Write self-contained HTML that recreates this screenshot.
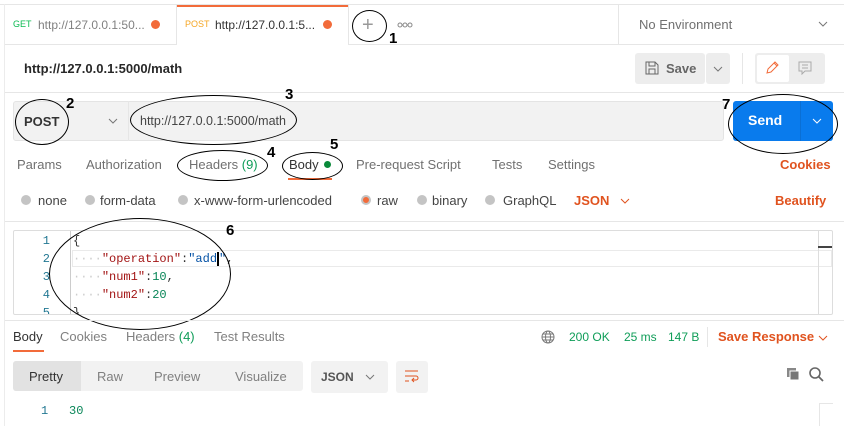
<!DOCTYPE html>
<html><head><meta charset="utf-8"><style>
*{margin:0;padding:0;box-sizing:border-box}
body{width:844px;height:426px;background:#fff;position:relative;overflow:hidden;font-family:"Liberation Sans",sans-serif;font-size:12px;color:#505050}
.a{position:absolute;white-space:nowrap}
.ln{position:absolute;background:#e6e6e6}
.mono{font-family:"Liberation Mono",monospace;font-size:12px}
.ell{position:absolute;border:1px solid #000;border-radius:50%}
.num{position:absolute;font-weight:bold;font-size:15px;color:#000}
.dot{position:absolute;width:10px;height:10px;border-radius:50%;background:#c4c4c4}
.or{color:#e0531f}
.t13{font-size:13px}
</style></head><body>
<div class="ln" style="left:0;top:4px;width:844px;height:1px"></div>
<div class="ln" style="left:4px;top:4px;width:1px;height:422px;background:#ececec"></div>
<div class="ln" style="left:5px;top:44px;width:172px;height:1px"></div>
<div class="ln" style="left:349px;top:44px;width:495px;height:1px"></div>
<div class="ln" style="left:176px;top:5px;width:1px;height:40px"></div>
<div class="ln" style="left:348px;top:5px;width:1px;height:40px"></div>
<div class="ln" style="left:618px;top:5px;width:1px;height:40px"></div>
<div class="a" style="left:177px;top:5px;width:171px;height:2px;background:#f26b3a"></div>
<div class="a" style="left:13px;top:19px;font-size:9px;color:#0cbb52">GET</div>
<div class="a" style="left:38px;top:18px;color:#808080">http://127.0.0.1:50...</div>
<div class="a" style="left:151px;top:20px;width:9px;height:9px;border-radius:50%;background:#f26b3a"></div>
<div class="a" style="left:185px;top:19px;font-size:9px;color:#f5a623">POST</div>
<div class="a" style="left:215px;top:18px;color:#333">http://127.0.0.1:5...</div>
<div class="a" style="left:323px;top:20px;width:9px;height:9px;border-radius:50%;background:#f26b3a"></div>
<div class="a" style="left:362px;top:17px;font-size:20px;color:#999;line-height:16px">+</div>
<div class="ell" style="left:352px;top:10px;width:35px;height:32px"></div>
<div class="num" style="left:389px;top:30px">1</div>
<svg class="a" style="left:397px;top:22px" width="16" height="6"><circle cx="3" cy="3" r="2" stroke="#888" fill="none"/><circle cx="8" cy="3" r="2" stroke="#888" fill="none"/><circle cx="13" cy="3" r="2" stroke="#888" fill="none"/></svg>
<div class="a t13" style="left:639px;top:17px;color:#707070">No Environment</div>
<svg class="a" style="left:818px;top:21px" width="10" height="6"><path d="M1 1l4 4 4-4" stroke="#777" fill="none"/></svg>
<div class="a" style="left:24px;top:61px;font-weight:bold;font-size:13px;color:#282828">http://127.0.0.1:5000/math</div>
<div class="a" style="left:635px;top:53px;width:70px;height:31px;background:#ededed;border-radius:3px"></div>
<svg class="a" style="left:645px;top:61px" width="14" height="14"><path d="M1 1h9l3 3v9H1z M4 1v4h6V1 M4 13V8h6v5" stroke="#666" fill="none"/></svg>
<div class="a t13" style="left:666px;top:61px;font-weight:bold;color:#666">Save</div>
<div class="a" style="left:706px;top:53px;width:24px;height:31px;background:#ededed;border-radius:3px"></div>
<svg class="a" style="left:713px;top:66px" width="10" height="6"><path d="M1 1l4 4 4-4" stroke="#777" fill="none"/></svg>
<div class="ln" style="left:742px;top:53px;width:1px;height:31px"></div>
<div class="a" style="left:755px;top:53px;width:70px;height:31px;background:#ededed;border-radius:3px"></div>
<div class="a" style="left:757px;top:55px;width:32px;height:27px;background:#fff;border-radius:2px"></div>
<svg class="a" style="left:765px;top:61px" width="14" height="14"><path d="M2 12l1-4 7-7 3 3-7 7z M9 2l3 3" stroke="#f26b3a" fill="none"/></svg>
<svg class="a" style="left:798px;top:61px" width="14" height="14"><path d="M1 1h12v9H7l-3 3v-3H1z M4 4h6M4 7h6" stroke="#aaa" fill="none"/></svg>
<div class="ln" style="left:5px;top:92px;width:839px;height:1px"></div>
<div class="a" style="left:13px;top:101px;width:711px;height:40px;background:#f2f2f2;border:1px solid #e4e4e4;border-radius:3px"></div>
<div class="ln" style="left:128px;top:101px;width:1px;height:40px"></div>
<div class="a t13" style="left:24px;top:114px;font-weight:bold;color:#333">POST</div>
<svg class="a" style="left:108px;top:118px" width="10" height="6"><path d="M1 1l4 4 4-4" stroke="#777" fill="none"/></svg>
<div class="a" style="left:140px;top:114px;color:#444;font-size:12.5px">http://127.0.0.1:5000/math</div>
<div class="a" style="left:733px;top:101px;width:100px;height:40px;background:#097bed;border-radius:3px"></div>
<div class="ln" style="left:800px;top:101px;width:1px;height:40px;background:#0a6fd4"></div>
<div class="a" style="left:748px;top:112px;font-weight:bold;font-size:14px;color:#fff">Send</div>
<svg class="a" style="left:812px;top:118px" width="10" height="6"><path d="M1 1l4 4 4-4" stroke="#fff" fill="none"/></svg>
<div class="ell" style="left:15px;top:99px;width:54px;height:46px"></div>
<div class="num" style="left:66px;top:95px">2</div>
<div class="ell" style="left:130px;top:95px;width:167px;height:50px"></div>
<div class="num" style="left:285px;top:86px">3</div>
<div class="num" style="left:722px;top:96px">7</div>
<div class="ell" style="left:728px;top:94px;width:110px;height:60px"></div>
<div class="a t13" style="left:17px;top:157px;color:#707070">Params</div>
<div class="a t13" style="left:86px;top:157px;color:#707070">Authorization</div>
<div class="a t13" style="left:189px;top:157px;color:#707070">Headers <span style="color:#0f9d58">(9)</span></div>
<div class="a t13" style="left:289px;top:157px;color:#333">Body</div>
<div class="a" style="left:324px;top:161px;width:7px;height:7px;border-radius:50%;background:#0a8a3a"></div>
<div class="a" style="left:288px;top:178px;width:44px;height:2px;background:#f26b3a"></div>
<div class="a t13" style="left:356px;top:157px;color:#707070">Pre-request Script</div>
<div class="a t13" style="left:492px;top:157px;color:#707070">Tests</div>
<div class="a t13" style="left:548px;top:157px;color:#707070">Settings</div>
<div class="a or t13" style="left:780px;top:157px;font-weight:bold">Cookies</div>
<div class="ell" style="left:177px;top:150px;width:91px;height:31px"></div>
<div class="num" style="left:267px;top:144px">4</div>
<div class="ell" style="left:282px;top:152px;width:61px;height:28px"></div>
<div class="num" style="left:330px;top:136px">5</div>
<div class="dot" style="left:21px;top:195px"></div><div class="a t13" style="left:38px;top:193px;color:#444">none</div>
<div class="dot" style="left:85px;top:195px"></div><div class="a t13" style="left:100px;top:193px;color:#444">form-data</div>
<div class="dot" style="left:178px;top:195px"></div><div class="a t13" style="left:194px;top:193px;color:#444">x-www-form-urlencoded</div>
<div class="dot" style="left:361px;top:195px;background:#f26b3a;border:2px solid #c4c4c4"></div><div class="a t13" style="left:377px;top:193px;color:#444">raw</div>
<div class="dot" style="left:417px;top:195px"></div><div class="a t13" style="left:432px;top:193px;color:#444">binary</div>
<div class="dot" style="left:485px;top:195px"></div><div class="a t13" style="left:503px;top:193px;color:#444">GraphQL</div>
<div class="a or t13" style="left:574px;top:193px;font-weight:bold">JSON</div>
<svg class="a" style="left:620px;top:198px" width="10" height="6"><path d="M1 1l4 4 4-4" stroke="#e0531f" fill="none"/></svg>
<div class="a or t13" style="left:775px;top:193px;font-weight:bold">Beautify</div>
<div class="ln" style="left:5px;top:221px;width:839px;height:1px"></div>
<div class="a" style="left:13px;top:230px;width:820px;height:85px;border:1px solid #ddd;border-radius:2px;overflow:hidden">
<div class="a mono" style="left:22px;top:1px;line-height:18px;color:#237893;text-align:right;width:14px">1<br>2<br>3<br>4<br>5</div>
</div>
<div class="a" style="left:72px;top:250px;width:760px;height:17px;border:1px solid #eaeaea"></div>
<div class="ln" style="left:70px;top:231px;width:1px;height:83px;background:#ccc"></div>
<div class="ln" style="left:818px;top:231px;width:1px;height:83px;background:#ddd"></div>
<div class="ln" style="left:818px;top:246px;width:14px;height:2px;background:#444"></div>
<div class="a" style="left:72px;top:231px;width:740px;height:83px;overflow:hidden">
<div class="a mono" style="left:1px;top:1px;line-height:18px;color:#333">{<br><span style="color:#ccc">····</span><span style="color:#a31515">"operation"</span>:<span style="color:#0451a5">"add</span><span style="border-left:2px solid #000"></span><span style="color:#0451a5">"</span>,<br><span style="color:#ccc">····</span><span style="color:#a31515">"num1"</span>:<span style="color:#098658">10</span>,<br><span style="color:#ccc">····</span><span style="color:#a31515">"num2"</span>:<span style="color:#098658">20</span><br>}</div></div>
<div class="ell" style="left:49px;top:218px;width:182px;height:112px"></div>
<div class="num" style="left:226px;top:222px">6</div>
<div class="ln" style="left:5px;top:320px;width:839px;height:1px"></div>
<div class="a" style="left:13px;top:329px;color:#333;font-size:13px">Body</div>
<div class="a" style="left:13px;top:350px;width:31px;height:2px;background:#f26b3a"></div>
<div class="a" style="left:60px;top:329px;color:#808080;font-size:13px">Cookies</div>
<div class="a" style="left:126px;top:329px;color:#808080;font-size:13px">Headers <span style="color:#0f9d58">(4)</span></div>
<div class="a" style="left:214px;top:329px;color:#808080;font-size:13px">Test Results</div>
<svg class="a" style="left:541px;top:330px" width="14" height="14"><circle cx="7" cy="7" r="6" stroke="#777" fill="none"/><ellipse cx="7" cy="7" rx="2.5" ry="6" stroke="#777" fill="none"/><path d="M1 7h12M2 4h10M2 10h10" stroke="#777"/></svg>
<div class="a" style="left:569px;top:330px;color:#0f9d58">200 OK</div>
<div class="a" style="left:624px;top:330px;color:#0f9d58">25 ms</div>
<div class="a" style="left:668px;top:330px;color:#0f9d58">147 B</div>
<div class="ln" style="left:707px;top:327px;width:1px;height:20px"></div>
<div class="a or t13" style="left:718px;top:329px;font-weight:bold">Save Response</div>
<svg class="a" style="left:818px;top:335px" width="10" height="6"><path d="M1 1l4 4 4-4" stroke="#e0531f" fill="none"/></svg>
<div class="a" style="left:13px;top:361px;width:290px;height:30px;background:#f2f2f2;border-radius:3px"></div>
<div class="a" style="left:13px;top:361px;width:68px;height:30px;background:#e2e2e2;border-radius:3px 0 0 3px"></div>
<div class="a" style="left:29px;top:369px;color:#333;font-size:13px">Pretty</div>
<div class="a" style="left:97px;top:369px;color:#808080;font-size:13px">Raw</div>
<div class="a" style="left:154px;top:369px;color:#808080;font-size:13px">Preview</div>
<div class="a" style="left:235px;top:369px;color:#808080;font-size:13px">Visualize</div>
<div class="a" style="left:311px;top:361px;width:77px;height:32px;background:#f2f2f2;border-radius:3px"></div>
<div class="a" style="left:321px;top:370px;font-weight:bold;color:#555">JSON</div>
<svg class="a" style="left:365px;top:374px" width="10" height="6"><path d="M1 1l4 4 4-4" stroke="#777" fill="none"/></svg>
<div class="a" style="left:396px;top:361px;width:32px;height:32px;background:#f2f2f2;border-radius:3px"></div>
<svg class="a" style="left:404px;top:369px" width="16" height="14"><path d="M1 2h13M1 7h11a2 2 0 010 4H8M10 9l-2 2 2 2M1 12h4" stroke="#e0531f" fill="none"/></svg>
<svg class="a" style="left:786px;top:367px" width="14" height="14"><rect x="1" y="1" width="9" height="9" fill="#888"/><rect x="4" y="4" width="9" height="9" fill="#777" stroke="#fff"/></svg>
<svg class="a" style="left:809px;top:367px" width="15" height="15"><circle cx="6" cy="6" r="5" stroke="#666" stroke-width="1.6" fill="none"/><path d="M10 10l4 4" stroke="#666" stroke-width="1.8"/></svg>
<div class="a mono" style="left:41px;top:404px;color:#237893">1</div>
<div class="a mono" style="left:69px;top:404px;color:#098658">30</div>
<div class="ln" style="left:819px;top:403px;width:1px;height:23px"></div>
<div class="ln" style="left:819px;top:403px;width:14px;height:1px"></div>
</body></html>
